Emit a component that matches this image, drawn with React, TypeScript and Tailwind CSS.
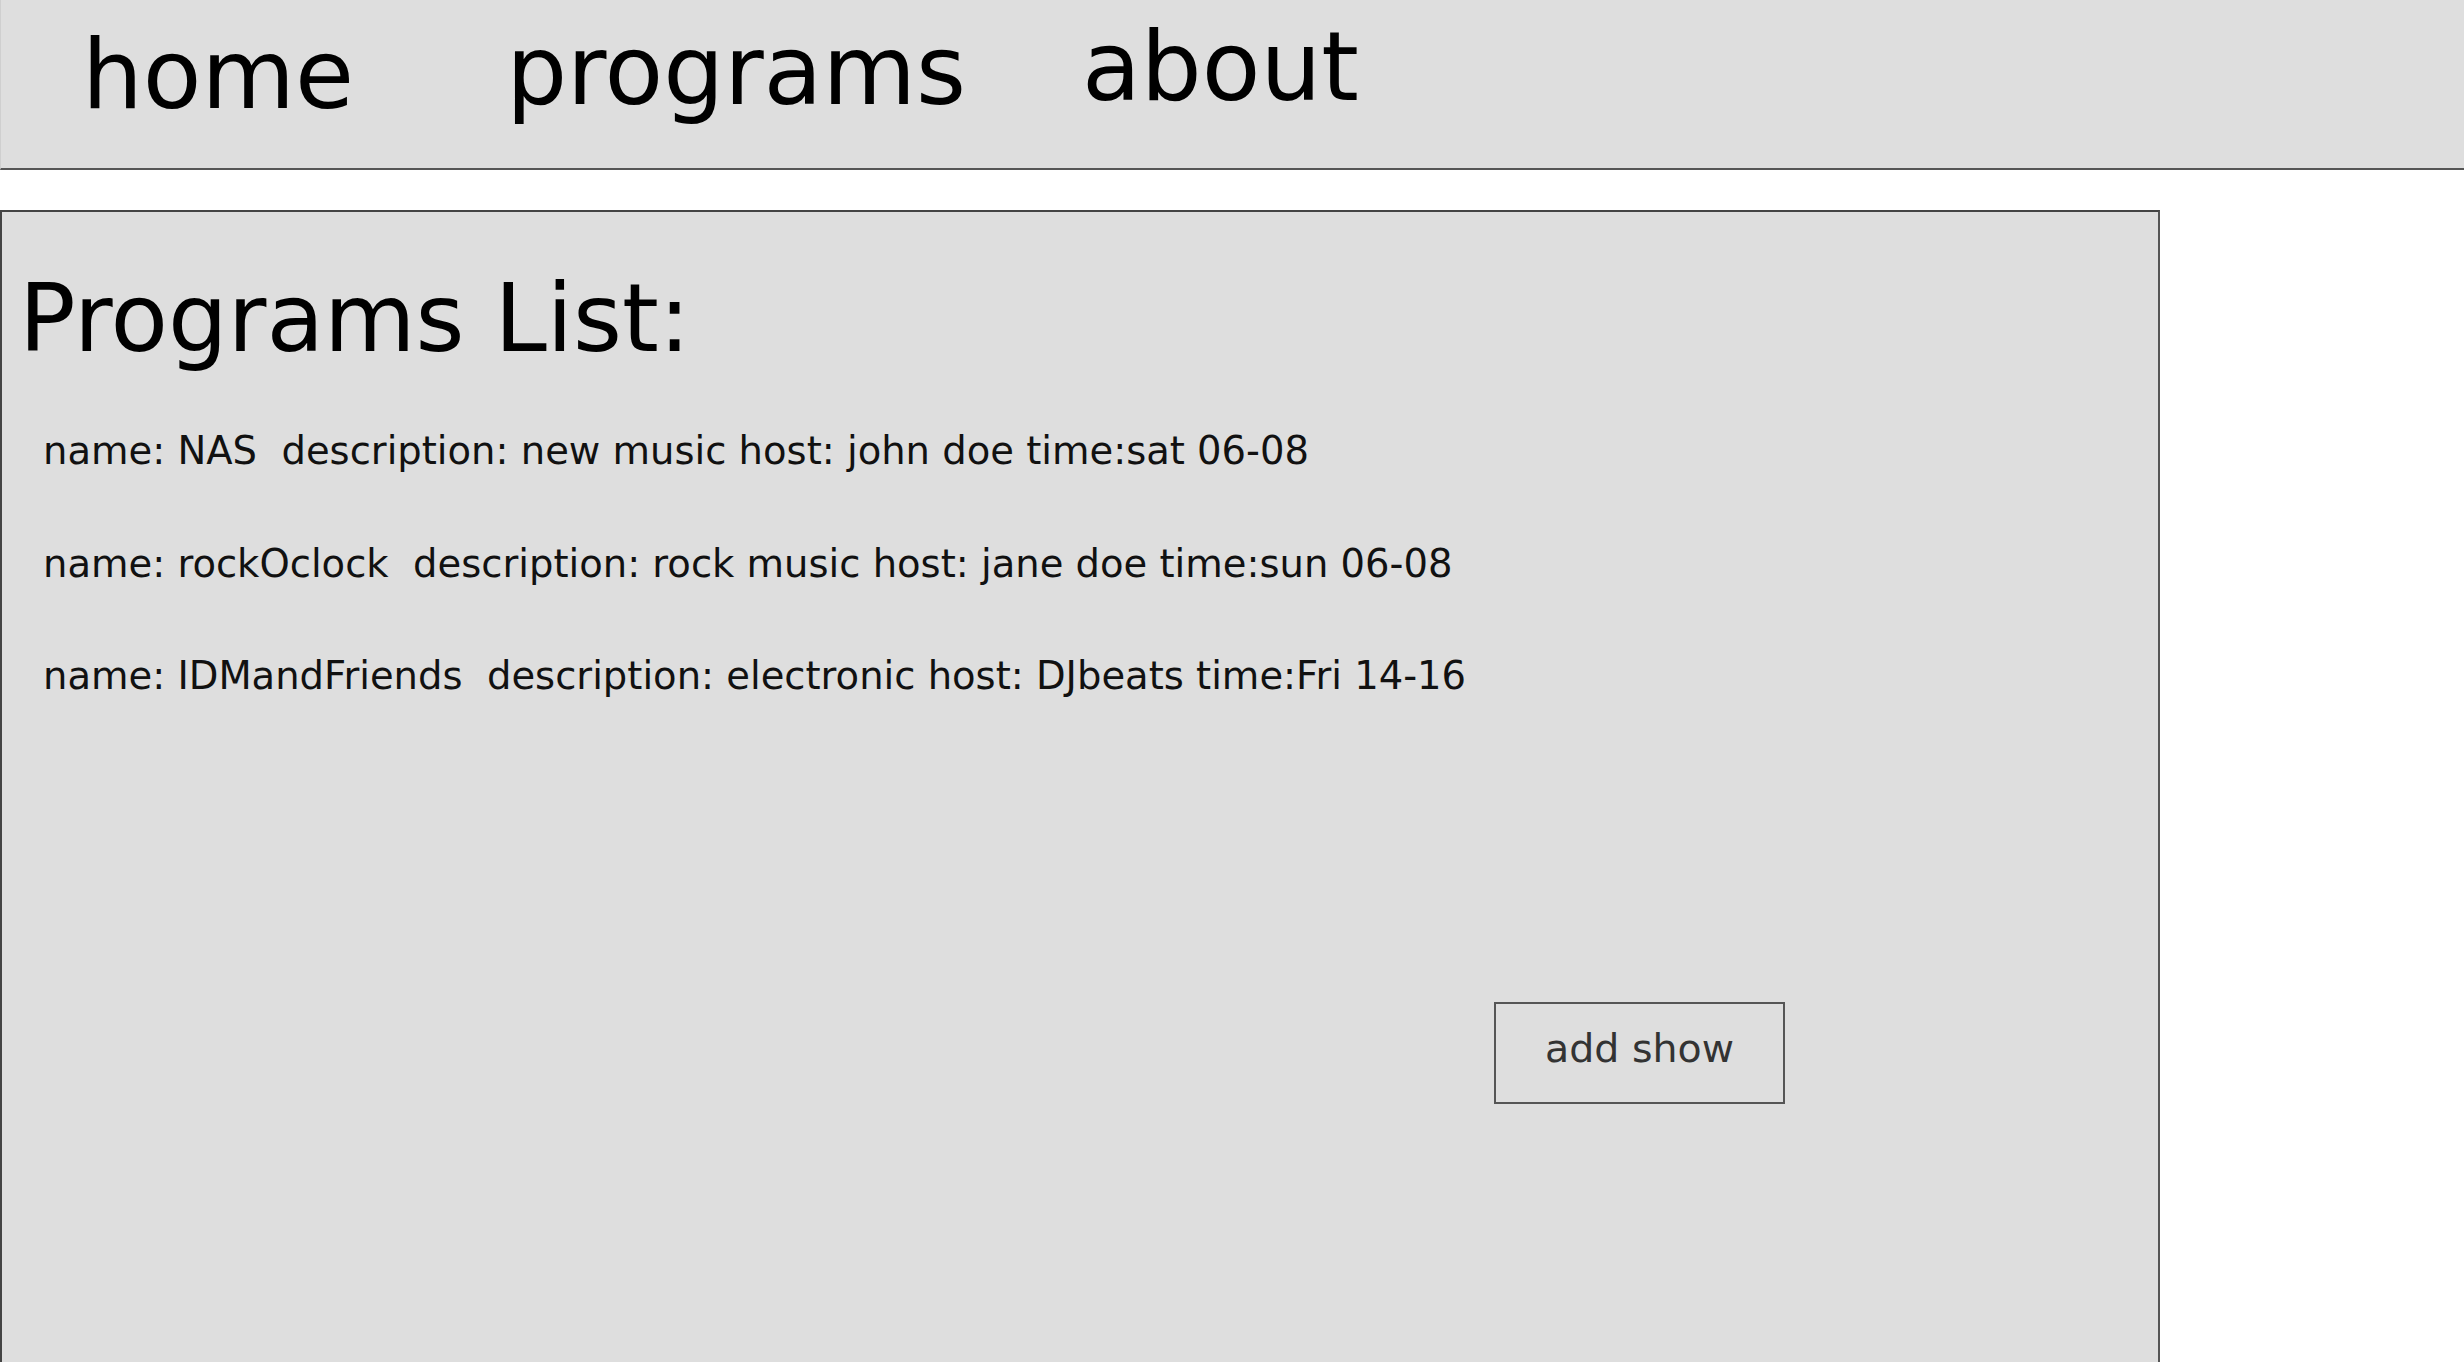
const programs = [
  { name: 'NAS', description: 'new music', host: 'john doe', time: 'sat 06-08' },
  { name: 'rockOclock', description: 'rock music', host: 'jane doe', time: 'sun 06-08' },
  { name: 'IDMandFriends', description: 'electronic', host: 'DJbeats', time: 'Fri 14-16' },
];

function NavBar() {
  return (
    <nav className="flex h-[170px] items-start border-b-2 border-l border-[#555] border-l-[#cfcfcf] bg-[#dedede] pl-[81px] text-[96px] leading-none text-black">
      <a className="pt-[27px]">home</a>
      <a className="ml-[152px] pt-[23px]">programs</a>
      <a className="ml-[116px] pt-[19px]">about</a>
    </nav>
  );
}

function ProgramRow({ program }: { program: (typeof programs)[number] }) {
  return (
    <li className="whitespace-pre text-[38.5px] leading-none text-[#111]">
      name: {program.name}  description: {program.description} host: {program.host} time:{program.time}
    </li>
  );
}

export default function App() {
  return (
    <div className="min-h-screen bg-white font-['DejaVu_Sans',sans-serif]">
      <NavBar />
      <main className="mt-[40px] h-[1300px] w-[2160px] border-2 border-[#444] border-r-[#555] bg-[#dedede] pl-[17px] pt-[60px]">
        <h1 className="text-[94px] leading-none text-black">Programs List:</h1>
        <ul className="mt-[66px] flex flex-col gap-[74px] pl-[24px]">
          {programs.map((p) => (
            <ProgramRow key={p.name} program={p} />
          ))}
        </ul>
        <button className="ml-[1475px] mt-[306px] flex h-[102px] w-[291px] items-center justify-center border-2 border-[#555] pb-[8px] text-[39.5px] leading-none text-[#333]">
          add show
        </button>
      </main>
    </div>
  );
}
